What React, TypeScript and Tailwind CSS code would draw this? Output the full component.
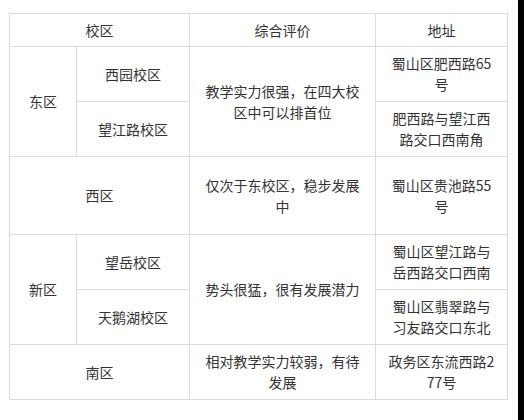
import React from "react";

const td =
  "border border-[#dcdcdc] px-[10px] py-0 text-center align-middle break-all";

export default function App() {
  return (
    <div
      className="flex h-[420px] w-[524px] bg-white text-[14px] leading-[21px] text-[#333]"
      style={{ fontFamily: '"Noto Sans CJK SC", "Noto Sans", sans-serif' }}
    >
      <div className="flex-1 pl-[9px] pt-[13px]">
        <table className="table-fixed border-collapse w-[498px]">
          <colgroup>
            <col className="w-[67px]" />
            <col className="w-[113px]" />
            <col className="w-[186px]" />
            <col className="w-[132px]" />
          </colgroup>
          <tbody>
            <tr className="h-[33px]">
              <td className={td} colSpan={2}>校区</td>
              <td className={td}>综合评价</td>
              <td className={td}>地址</td>
            </tr>
            <tr className="h-[55px]">
              <td className={td} rowSpan={2}>东区</td>
              <td className={td}>西园校区</td>
              <td className={td} rowSpan={2}>教学实力很强，在四大校区中可以排首位</td>
              <td className={td}>蜀山区肥西路65号</td>
            </tr>
            <tr className="h-[55px]">
              <td className={td}>望江路校区</td>
              <td className={td}>肥西路与望江西路交口西南角</td>
            </tr>
            <tr className="h-[78px]">
              <td className={td} colSpan={2}>西区</td>
              <td className={td}>仅次于东校区，稳步发展中</td>
              <td className={td}>蜀山区贵池路55号</td>
            </tr>
            <tr className="h-[55px]">
              <td className={td} rowSpan={2}>新区</td>
              <td className={td}>望岳校区</td>
              <td className={td} rowSpan={2}>势头很猛，很有发展潜力</td>
              <td className={td}>蜀山区望江路与岳西路交口西南</td>
            </tr>
            <tr className="h-[55px]">
              <td className={td}>天鹅湖校区</td>
              <td className={td}>蜀山区翡翠路与习友路交口东北</td>
            </tr>
            <tr className="h-[55px]">
              <td className={td} colSpan={2}>南区</td>
              <td className={td}>相对教学实力较弱，有待发展</td>
              <td className={td}>政务区东流西路277号</td>
            </tr>
          </tbody>
        </table>
      </div>
      <div className="w-[6px] bg-black" />
    </div>
  );
}
